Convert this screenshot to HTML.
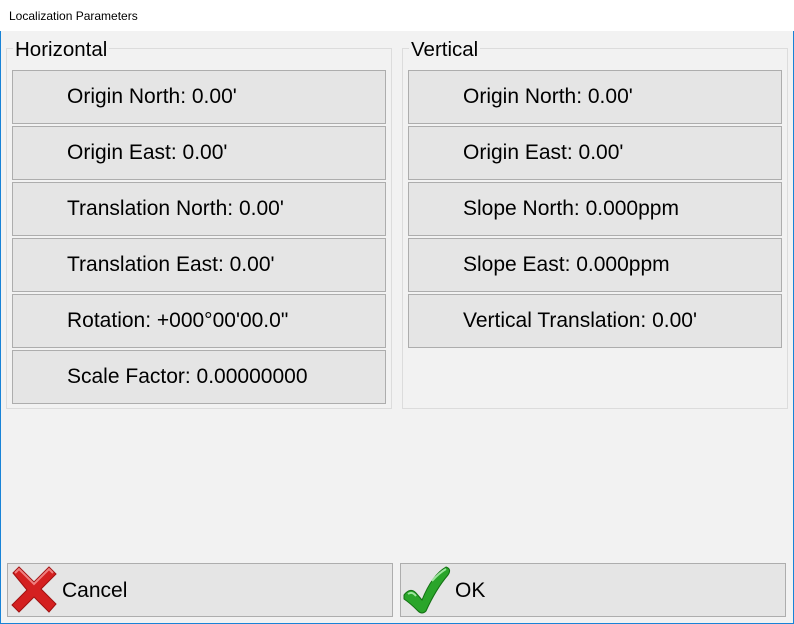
<!DOCTYPE html>
<html><head><style>
*{margin:0;padding:0;box-sizing:border-box}
body{width:794px;height:624px;background:#f0f0f0;font-family:"Liberation Sans",sans-serif;position:relative;overflow:hidden}
.win{position:absolute;left:0;top:0;width:794px;height:624px;border:1px solid #1883d7;border-top:none;background:#f2f2f2}
.title{position:absolute;left:-1px;top:0;width:794px;height:31px;background:#fff;font-size:12px;color:#000;padding:9px 0 0 9px}
.grp{position:absolute;border:1px solid #dcdcdc}
.lg{position:absolute;top:-10px;left:6px;background:#f2f2f2;font-size:20.5px;padding:0 2px;line-height:22px}
.btn{position:absolute;background:#e5e5e5;border:1px solid #adadad;font-size:21px;line-height:52px;padding-left:54px;white-space:nowrap}
.bb{position:absolute;background:#e5e5e5;border:1px solid #adadad;font-size:21px;line-height:54px;white-space:nowrap}
svg{position:absolute}
</style></head><body>
<div class="win">
<div class="title">Localization Parameters</div>
<div class="grp" style="left:5px;top:48px;width:386px;height:361px"><div class="lg">Horizontal</div></div>
<div class="grp" style="left:401px;top:48px;width:386px;height:361px"><div class="lg">Vertical</div></div>

<div class="btn" style="left:11px;top:70px;width:374px;height:54px">Origin North: 0.00'</div>
<div class="btn" style="left:11px;top:126px;width:374px;height:54px">Origin East: 0.00'</div>
<div class="btn" style="left:11px;top:182px;width:374px;height:54px">Translation North: 0.00'</div>
<div class="btn" style="left:11px;top:238px;width:374px;height:54px">Translation East: 0.00'</div>
<div class="btn" style="left:11px;top:294px;width:374px;height:54px">Rotation: +000°00'00.0"</div>
<div class="btn" style="left:11px;top:350px;width:374px;height:54px">Scale Factor: 0.00000000</div>

<div class="btn" style="left:407px;top:70px;width:374px;height:54px">Origin North: 0.00'</div>
<div class="btn" style="left:407px;top:126px;width:374px;height:54px">Origin East: 0.00'</div>
<div class="btn" style="left:407px;top:182px;width:374px;height:54px">Slope North: 0.000ppm</div>
<div class="btn" style="left:407px;top:238px;width:374px;height:54px">Slope East: 0.000ppm</div>
<div class="btn" style="left:407px;top:294px;width:374px;height:54px">Vertical Translation: 0.00'</div>

<div class="bb" style="left:6px;top:563px;width:386px;height:54px;padding-left:54px">Cancel</div>
<svg style="left:8px;top:565px" width="50" height="50" viewBox="0 0 50 50">
<path d="M4 8 L10 2 L25 17 L40 2 L47 9 L32 24 L47 39 L40 47 L25 32 L10 47 L3 40 L18 25 Z" fill="#d42020" stroke="#a01010" stroke-width="1"/>
<path d="M6 8 L10 4 L25 19 L40 4 L44 8" fill="none" stroke="#f08080" stroke-width="2"/>
</svg>
<div class="bb" style="left:399px;top:563px;width:386px;height:54px;padding-left:54px">OK</div>
<svg style="left:401px;top:565px" width="50" height="50" viewBox="0 0 50 50">
<path d="M2 30 Q8 22 14 28 L20 35 Q30 10 44 2 Q50 4 46 10 Q34 24 24 46 Q20 50 16 46 Q8 38 2 34 Z" fill="#2aa52a" stroke="#137013" stroke-width="1"/>
<path d="M6 29 Q10 26 14 31 M30 16 Q37 8 44 4" fill="none" stroke="#9ee59e" stroke-width="2"/>
</svg>
</div>
</body></html>
